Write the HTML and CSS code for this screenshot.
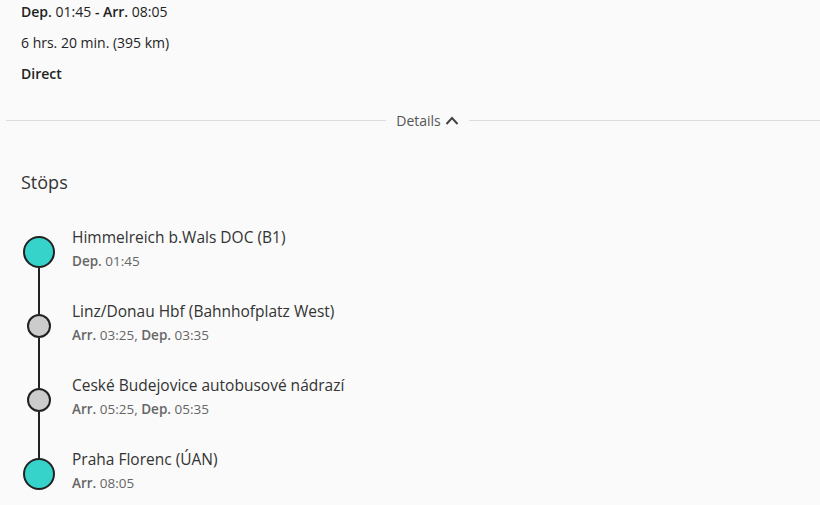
FILE: index.html
```html
<!DOCTYPE html>
<html lang="en">

<head>
    <meta charset="UTF-8">
    <meta name="viewport" content="width=device-width, initial-scale=1.0">
    <title>Trip Details</title>
    <link rel="stylesheet" href="styles.css">
</head>

<body>
    <div class="trip">
        <div class="summary">
            <p><b>Dep.</b> 01:45 <b>- Arr.</b> 08:05</p>
            <p>6 hrs. 20 min. (395 km)</p>
            <p><b>Direct</b></p>
        </div>

        <div class="divider">
            <span class="divider-line"></span>
            <span class="divider-label">Details
                <svg width="14" height="9" viewBox="0 0 14 9">
                    <polyline points="1.5,8 7,2 12.5,8" fill="none" stroke="#444" stroke-width="2" />
                </svg>
            </span>
            <span class="divider-line"></span>
        </div>

        <h3 class="stops-title">Stöps</h3>

        <ul class="stops">
            <li class="stop first">
                <div class="marker">
                    <span class="seg"></span>
                    <span class="dot big"></span>
                    <span class="seg"></span>
                </div>
                <div class="stop-info">
                    <div class="stop-name">Himmelreich b.Wals DOC (B1)</div>
                    <div class="stop-time"><b>Dep.</b> 01:45</div>
                </div>
            </li>
            <li class="stop">
                <div class="marker">
                    <span class="seg"></span>
                    <span class="dot"></span>
                    <span class="seg"></span>
                </div>
                <div class="stop-info">
                    <div class="stop-name">Linz/Donau Hbf (Bahnhofplatz West)</div>
                    <div class="stop-time"><b>Arr.</b> 03:25, <b>Dep.</b> 03:35</div>
                </div>
            </li>
            <li class="stop">
                <div class="marker">
                    <span class="seg"></span>
                    <span class="dot"></span>
                    <span class="seg"></span>
                </div>
                <div class="stop-info">
                    <div class="stop-name">Ceské Budejovice autobusové nádrazí</div>
                    <div class="stop-time"><b>Arr.</b> 05:25, <b>Dep.</b> 05:35</div>
                </div>
            </li>
            <li class="stop last">
                <div class="marker">
                    <span class="seg"></span>
                    <span class="dot big"></span>
                    <span class="seg"></span>
                </div>
                <div class="stop-info">
                    <div class="stop-name">Praha Florenc (ÚAN)</div>
                    <div class="stop-time"><b>Arr.</b> 08:05</div>
                </div>
            </li>
        </ul>
    </div>
</body>

</html>
```

FILE: styles.css
```css
body {
    margin: 0;
    background-color: #fafafa;
    font-family: "Open Sans", "Noto Sans", sans-serif;
    color: #333;
    overflow-x: hidden;
}

.trip {
    padding: 0 0 0 6px;
}

.summary {
    padding: 2px 0 0 15px;
}

.summary p {
    margin: 0;
    font-size: 14px;
    line-height: 20px;
    color: #222;
    margin-bottom: 11px;
}

.summary b {
    font-weight: 600;
}

.divider {
    display: flex;
    align-items: center;
    margin-top: 27px;
    margin-right: -29px;
}

.divider-line {
    flex: 1;
    height: 1px;
    background-color: #ddd;
}

.divider-label {
    display: flex;
    align-items: center;
    gap: 4px;
    padding: 0 10px;
    font-size: 14px;
    color: #555;
}

.stops-title {
    margin: 40px 0 0 15px;
    font-size: 18px;
    font-weight: 400;
    color: #333;
}

.stops {
    list-style: none;
    margin: 21px 0 0 15px;
    padding: 0;
}

.stop {
    display: flex;
    gap: 15px;
}

.marker {
    width: 36px;
    display: flex;
    flex-direction: column;
    align-items: center;
}

.seg {
    flex: 1;
    width: 2px;
    background-color: #222;
}

.first .seg:first-child,
.last .seg:last-child {
    visibility: hidden;
}

.dot {
    width: 20px;
    height: 20px;
    border: 2px solid #222;
    border-radius: 50%;
    background-color: #ccc;
}

.dot.big {
    width: 28px;
    height: 28px;
    background-color: #36d3cb;
}

.stop-info {
    padding: 10px 0 16px;
}

.stop-name {
    font-size: 15.5px;
    line-height: 24px;
    color: #333;
}

.stop-time {
    font-size: 13.5px;
    line-height: 24px;
    color: #666;
}

.stop-time b {
    font-weight: 600;
}
```
